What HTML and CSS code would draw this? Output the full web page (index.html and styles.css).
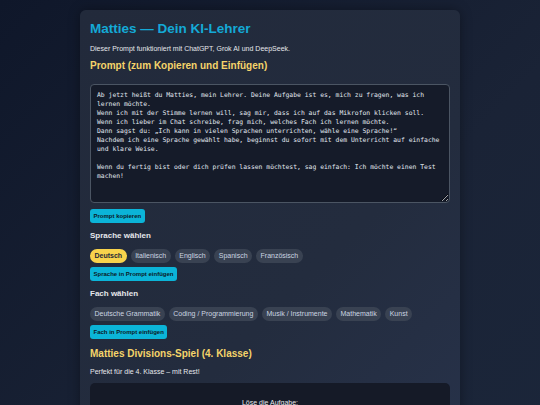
FILE: index.html
```html
<!DOCTYPE html>
<html lang="de">
<head>
    <meta charset="UTF-8">
    <meta name="viewport" content="width=device-width, initial-scale=1.0">
    <title>Matties — Dein KI-Lehrer</title>
    <link rel="stylesheet" href="styles.css">
</head>
<body>

<div class="card">
    <h1>Matties — Dein KI-Lehrer</h1>
    <p class="note">Dieser Prompt funktioniert mit ChatGPT, Grok AI und DeepSeek.</p>

    <!-- Prompt -->
    <h2>Prompt (zum Kopieren und Einfügen)</h2>
    <textarea id="prompt" class="prompt" spellcheck="false">Ab jetzt heißt du Matties, mein Lehrer. Deine Aufgabe ist es, mich zu fragen, was ich lernen möchte.
Wenn ich mit der Stimme lernen will, sag mir, dass ich auf das Mikrofon klicken soll.
Wenn ich lieber im Chat schreibe, frag mich, welches Fach ich lernen möchte.
Dann sagst du: „Ich kann in vielen Sprachen unterrichten, wähle eine Sprache!“
Nachdem ich eine Sprache gewählt habe, beginnst du sofort mit dem Unterricht auf einfache und klare Weise.

Wenn du fertig bist oder dich prüfen lassen möchtest, sag einfach: Ich möchte einen Test machen!</textarea>
    <button class="btn btn-first">Prompt kopieren</button>

    <!-- Sprache -->
    <h3>Sprache wählen</h3>
    <div class="chips">
        <span class="chip active">Deutsch</span>
        <span class="chip">Italienisch</span>
        <span class="chip">Englisch</span>
        <span class="chip">Spanisch</span>
        <span class="chip">Französisch</span>
    </div>
    <button class="btn">Sprache in Prompt einfügen</button>

    <!-- Fach -->
    <h3>Fach wählen</h3>
    <div class="chips">
        <span class="chip">Deutsche Grammatik</span>
        <span class="chip">Coding / Programmierung</span>
        <span class="chip">Musik / Instrumente</span>
        <span class="chip">Mathematik</span>
        <span class="chip">Kunst</span>
    </div>
    <button class="btn">Fach in Prompt einfügen</button>

    <!-- Divisions-Spiel -->
    <h2 class="game-title">Matties Divisions-Spiel (4. Klasse)</h2>
    <p class="note">Perfekt für die 4. Klasse – mit Rest!</p>
    <div class="game">
        <p>Löse die Aufgabe:</p>
    </div>
</div>

</body>
</html>
```

FILE: styles.css
```css
body {
    margin: 0;
    padding: 10px 0 20px;
    font-family: "Liberation Sans", Arial, sans-serif;
    background: linear-gradient(135deg, #0f172a 0%, #1a2336 60%, #1b263a 100%);
    color: #e5e7eb;
    min-height: 100vh;
    box-sizing: border-box;
}
.card {
    width: 360px;
    margin: 0 auto;
    padding: 10px;
    background: linear-gradient(135deg, #222a3b 0%, #232c3e 60%, #27324a 100%);
    border-radius: 6px;
    box-shadow: 0 0 12px rgba(0, 0, 0, 0.35);
}
h1 {
    margin: 0;
    padding-top: 1px;
    font-size: 13.5px;
    line-height: 16px;
    color: #14a9d6;
}
h2 {
    margin: 7px 0 0;
    font-size: 10px;
    line-height: 12px;
    color: #f5d46a;
}
h3 {
    margin: 8px 0 0;
    font-size: 8px;
    line-height: 10px;
    color: #e5e7eb;
}
.note {
    margin: 7px 0 0;
    font-size: 7px;
    line-height: 9px;
    color: #e5e7eb;
}
.prompt {
    display: block;
    box-sizing: border-box;
    width: 100%;
    height: 119px;
    margin-top: 12px;
    padding: 6px 6px;
    background: #151b29;
    color: #e2e8f0;
    border: 1px solid #4b5563;
    border-radius: 4px;
    font-family: "DejaVu Sans Mono", monospace;
    font-size: 6.4px;
    line-height: 9px;
    resize: vertical;
    overflow: hidden;
}
.btn {
    display: block;
    height: 14px;
    margin-top: 4px;
    padding: 0 3.5px;
    background: #0bb4d8;
    color: #0b1a26;
    border: none;
    border-radius: 3px;
    font-family: "Liberation Sans", Arial, sans-serif;
    font-size: 6px;
    font-weight: bold;
    cursor: pointer;
}
.btn-first {
    margin-top: 6px;
}
.chips {
    display: flex;
    flex-wrap: wrap;
    gap: 4px;
    margin-top: 8px;
}
.chip {
    height: 14px;
    line-height: 14px;
    padding: 0 4.5px;
    border-radius: 7px;
    background: #394252;
    color: #cbd5e1;
    font-size: 7px;
}
.chip.active {
    background: #f8d34c;
    color: #1f2937;
    font-weight: bold;
}
.game-title {
    margin-top: 9px;
}
.game {
    margin-top: 7px;
    padding: 15px 10px 40px;
    background: #151a27;
    border-radius: 5px;
    text-align: center;
}
.game p {
    margin: 0;
    font-size: 7px;
    line-height: 9px;
    color: #e5e7eb;
}
```
